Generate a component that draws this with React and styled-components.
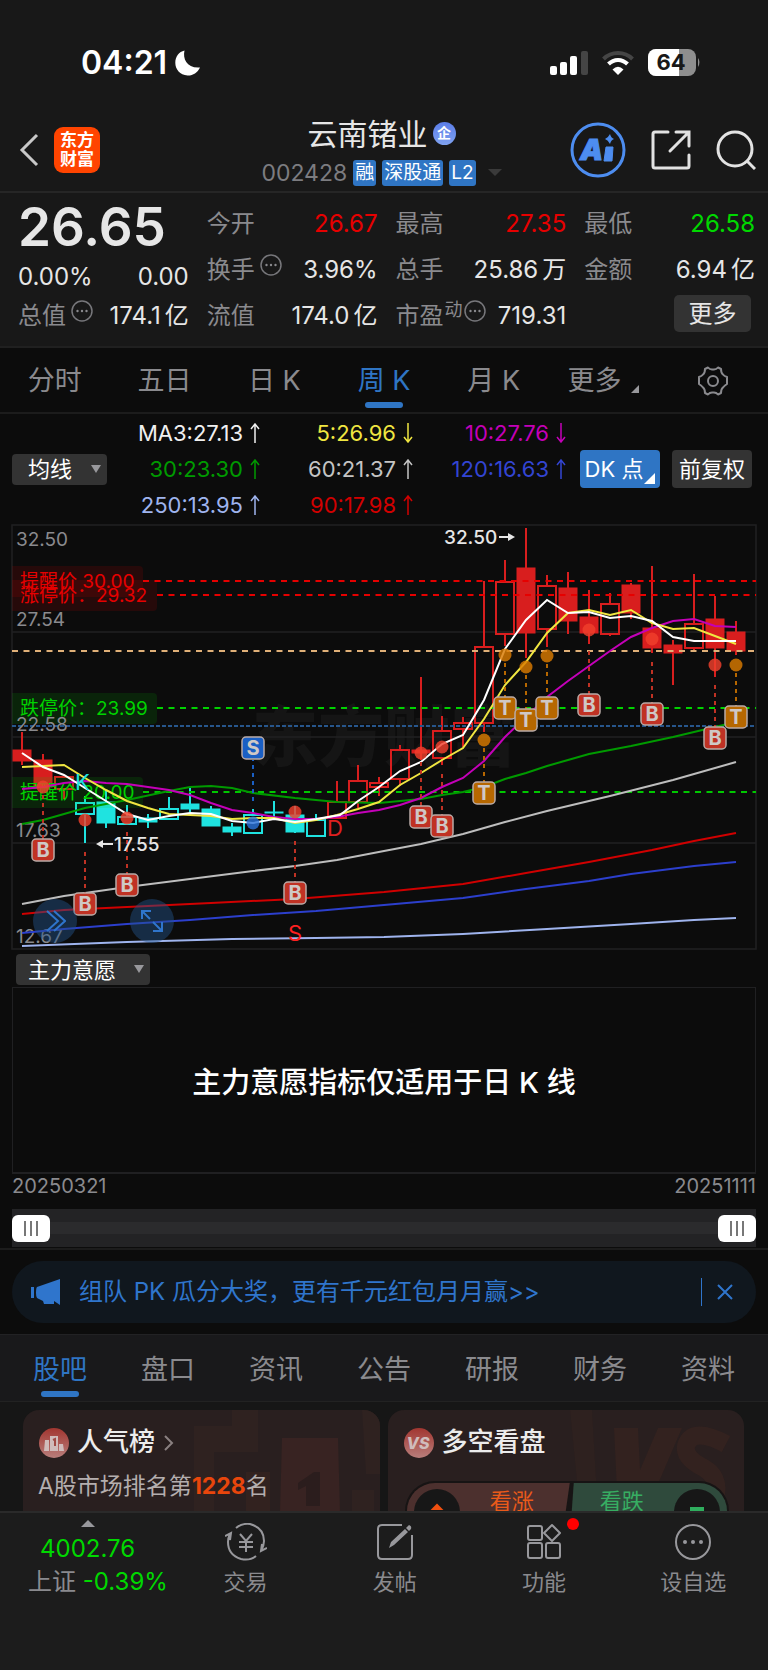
import React, { useState } from "react";
import styled, { createGlobalStyle } from "styled-components";

const quoteColumns = [
  [
    { label: "今开", value: "26.67", tone: "up" },
    { label: "换手", value: "3.96%", info: true },
    { label: "流值", value: "174.0", unit: "亿" },
  ],
  [
    { label: "最高", value: "27.35", tone: "up" },
    { label: "总手", value: "25.86", unit: "万" },
    { label: "市盈", sup: "动", value: "719.31", info: true },
  ],
  [
    { label: "最低", value: "26.58", tone: "down" },
    { label: "金额", value: "6.94", unit: "亿" },
  ],
];

const periods = ["分时", "五日", "日 K", "周 K", "月 K", "更多"];

const averages = [
  { text: "MA3:27.13", dir: "up", color: "#f0f0f0" },
  { text: "5:26.96", dir: "down", color: "#f0e641" },
  { text: "10:27.76", dir: "down", color: "#c400b8" },
  { text: "30:23.30", dir: "up", color: "#009a00" },
  { text: "60:21.37", dir: "up", color: "#c4c4c4" },
  { text: "120:16.63", dir: "up", color: "#3345d2" },
  { text: "250:13.95", dir: "up", color: "#9fb4ee" },
  { text: "90:17.98", dir: "up", color: "#d20000" },
];

// [high, bodyTop, bodyBottom, low, type]: r/c filled red/cyan, R/C hollow
const candles = [
  [212, 230, 241, 245, "r"],
  [234, 240, 267, 267, "r"],
  [257, 257, 269, 279, "R"],
  [276, 283, 294, 323, "C"],
  [270, 282, 303, 308, "c"],
  [285, 297, 304, 304, "C"],
  [294, 298, 302, 308, "c"],
  [277, 289, 299, 299, "C"],
  [268, 284, 289, 292, "c"],
  [286, 289, 306, 306, "c"],
  [303, 307, 312, 316, "c"],
  [289, 295, 313, 313, "C"],
  [281, 292, 293, 300, "c"],
  [286, 295, 312, 313, "c"],
  [294, 300, 316, 316, "C"],
  [261, 282, 298, 298, "R"],
  [245, 261, 282, 288, "R"],
  [257, 263, 267, 276, "R"],
  [225, 230, 259, 266, "R"],
  [157, 230, 233, 240, "r"],
  [196, 211, 238, 245, "R"],
  [197, 203, 209, 227, "R"],
  [61, 127, 203, 212, "R"],
  [40, 62, 114, 126, "R"],
  [8, 48, 113, 138, "r"],
  [55, 66, 109, 127, "R"],
  [52, 68, 101, 114, "r"],
  [70, 97, 113, 124, "r"],
  [73, 84, 114, 116, "R"],
  [63, 65, 93, 99, "r"],
  [46, 108, 128, 133, "r"],
  [120, 125, 133, 165, "r"],
  [54, 104, 128, 130, "R"],
  [76, 99, 128, 157, "r"],
  [101, 112, 131, 135, "r"],
];

const lines = [
  {
    color: "#9fb4ee",
    points:
      "22,426 127,422 232,419 316,418 384,417 463,414 547,409 631,404 694,400 736,398",
  },
  {
    color: "#2c3fcd",
    points:
      "22,413 64,409 127,404 190,400 253,395 316,391 384,385 463,378 526,369 589,361 631,354 694,346 736,342",
  },
  {
    color: "#d00000",
    points:
      "22,394 64,390 127,387 211,383 295,379 384,372 463,364 526,353 589,342 652,330 694,321 736,313",
  },
  {
    color: "#bdbdbd",
    points:
      "22,384 64,376 85,373 127,367 190,359 253,351 295,346 337,340 384,331 421,324 463,314 505,302 547,291 610,276 673,260 736,242",
  },
  {
    color: "#009a00",
    points:
      "22,304 43,300 85,288 127,280 169,271 190,267 211,266 232,268 253,273 295,278 337,282 379,283 400,281 421,279 442,275 463,272 484,267 505,259 526,253 547,246 568,240 589,234 610,230 631,226 673,217 694,212 715,207 736,202",
  },
  {
    color: "#c400b8",
    points:
      "22,269 43,267 64,263 85,261 106,263 127,264 148,267 169,270 190,275 211,283 232,290 253,293 274,297 295,299 316,299 337,297 358,293 379,290 400,285 421,278 442,267 463,258 484,241 505,217 526,197 547,177 568,161 589,146 610,131 631,117 652,108 673,101 694,99 715,106 736,107",
  },
  {
    color: "#f0e641",
    points:
      "22,247 43,246 64,245 85,258 106,270 127,281 148,288 169,294 190,295 211,296 232,299 253,298 274,298 295,303 316,300 337,295 358,289 379,282 400,265 421,253 442,240 463,228 484,199 505,165 526,142 547,113 568,93 589,90 610,95 631,90 652,103 673,109 694,108 715,116 736,124",
  },
  {
    color: "#ffffff",
    points:
      "22,233 43,247 64,255 85,268 106,281 127,294 148,300 169,296 190,293 211,294 232,301 253,303 274,299 295,302 316,299 340,295 358,281 379,267 400,251 421,242 442,224 463,215 484,180 505,129 526,100 547,80 568,93 589,92 610,98 631,96 652,101 673,117 694,121 715,121 736,121",
  },
];

const markerColors = { B: "#c03224", T: "#b66700", S: "#1a5fc4" };

const markers = [
  { i: 1, kind: "B", dot: 267, from: 275, y: 330 },
  { i: 3, kind: "B", dot: 300, from: 332, y: 384 },
  { i: 5, kind: "B", dot: 298, from: 312, y: 365 },
  { i: 13, kind: "B", dot: 292, from: 321, y: 373 },
  { i: 19, kind: "B", dot: 233, from: 242, y: 297 },
  { i: 20, kind: "B", dot: 227, from: 254, y: 306 },
  { i: 27, kind: "B", dot: 110, from: 131, y: 185 },
  { i: 30, kind: "B", dot: 119, from: 142, y: 194 },
  { i: 33, kind: "B", dot: 145, from: 165, y: 218 },
  { i: 22, kind: "T", dot: 220, from: 228, y: 273 },
  { i: 23, kind: "T", dot: 135, from: 143, y: 188 },
  { i: 24, kind: "T", dot: 147, from: 155, y: 200 },
  { i: 25, kind: "T", dot: 136, from: 144, y: 188 },
  { i: 34, kind: "T", dot: 145, from: 153, y: 197 },
  { i: 11, kind: "S", dot: 303, from: 281, y: 228 },
];

const priceTags = [
  { y: 61, width: 131, color: "#e60000", text: "提醒价 30.00" },
  { y: 75, width: 145, color: "#e60000", text: "涨停价：29.32" },
  { y: 188, width: 145, color: "#00d200", text: "跌停价：23.99" },
  { y: 272, width: 131, color: "#00d200", text: "提醒价 20.00" },
];

const scale = [
  { y: 26, text: "32.50" },
  { y: 106, text: "27.54" },
  { y: 211, text: "22.58" },
  { y: 317, text: "17.63" },
  { y: 423, text: "12.67" },
];

const infoTabs = ["股吧", "盘口", "资讯", "公告", "研报", "财务", "资料"];

const candleX = (i) => 22 + 21 * i;

const InfoDots = () => (
  <InfoIcon viewBox="0 0 22 22" aria-hidden="true">
    <circle cx="11" cy="11" r="10" fill="none" stroke="#77777b" strokeWidth="1.5" />
    <circle cx="6.5" cy="11" r="1.2" fill="#8a8a8e" />
    <circle cx="11" cy="11" r="1.2" fill="#8a8a8e" />
    <circle cx="15.5" cy="11" r="1.2" fill="#8a8a8e" />
  </InfoIcon>
);

const StatusBar = () => (
  <Status>
    <Clock>
      04:21
      <svg width="26" height="26" viewBox="0 0 26 26" aria-hidden="true">
        <path
          d="M9.5 0.5C7.5 9 12 18.5 25 17.5C22.5 23 17.5 25.8 12.5 25.5C5 25 0.3 19.5 0.3 12.8C0.3 6.5 4 1.8 9.5 0.5Z"
          fill="#fff"
        />
      </svg>
    </Clock>
    <StatusIcons>
      <svg width="38" height="24" viewBox="0 0 38 24" aria-hidden="true">
        <rect x="0" y="15" width="7" height="9" rx="2" fill="#fff" />
        <rect x="10" y="11" width="7" height="13" rx="2" fill="#fff" />
        <rect x="20" y="5" width="7" height="19" rx="2" fill="#fff" />
        <rect x="31" y="0" width="7" height="24" rx="2" fill="#454545" />
      </svg>
      <svg width="32" height="24" viewBox="0 0 32 24" aria-hidden="true">
        <path d="M1.5 8C9.5 0 22.5 0 30.5 8" fill="none" stroke="#454545" strokeWidth="4" />
        <path d="M6.5 13C12 7.5 20 7.5 25.5 13" fill="none" stroke="#fff" strokeWidth="4" />
        <path d="M10.5 18.5Q16 13 21.5 18.5L16 24Z" fill="#fff" />
      </svg>
      <svg width="53" height="27" viewBox="0 0 53 27" role="img" aria-label="64%">
        <clipPath id="battery">
          <rect width="48" height="27" rx="8" />
        </clipPath>
        <g clipPath="url(#battery)">
          <rect width="48" height="27" fill="#8e8e8e" />
          <rect width="31" height="27" fill="#fff" />
        </g>
        <path d="M50 9Q53 13 50 18Z" fill="#8e8e8e" />
        <text x="23" y="21" textAnchor="middle" fontSize="22" fontWeight="700" fill="#181818">
          64
        </text>
      </svg>
    </StatusIcons>
  </Status>
);

const Header = () => (
  <TopBar>
    <TopLeft>
      <IconButton aria-label="返回">
        <svg width="21" height="34" viewBox="0 0 21 34">
          <path d="M18 2L3 17L18 32" fill="none" stroke="#c8c8c8" strokeWidth="3" />
        </svg>
      </IconButton>
      <BrandLink href="#home">
        <span>东方</span>
        <span>财富</span>
      </BrandLink>
    </TopLeft>
    <TitleBlock>
      <TitleRow>
        <StockName>云南锗业</StockName>
        <CompanyBadge>企</CompanyBadge>
      </TitleRow>
      <CodeRow>
        <span>002428</span>
        <Tag>融</Tag>
        <Tag>深股通</Tag>
        <Tag>L2</Tag>
        <CodeCaret />
      </CodeRow>
    </TitleBlock>
    <TopRight>
      <IconButton aria-label="Ai">
        <svg width="56" height="56" viewBox="0 0 56 56">
          <circle cx="28" cy="28" r="26" fill="none" stroke="#4d8df0" strokeWidth="3" />
          <text
            x="10"
            y="38"
            fontSize="29"
            fontWeight="900"
            fontStyle="italic"
            fill="#4d8df0"
            stroke="#4d8df0"
            strokeWidth="1"
          >
            A
          </text>
          <path d="M36 25H43L42 39H34Z" fill="#4d8df0" stroke="#4d8df0" strokeLinejoin="round" />
          <path d="M40 12Q41 16 44 17Q41 18 40 22Q38 18 35 17Q38 16 40 12Z" fill="#4d8df0" />
        </svg>
      </IconButton>
      <IconButton aria-label="分享">
        <svg width="40" height="40" viewBox="0 0 40 40">
          <path
            d="M17 2H4Q2 2 2 4V36Q2 38 4 38H36Q38 38 38 36V25M25 2H38V16M37 3L19 21"
            fill="none"
            stroke="#e2e2e2"
            strokeWidth="3"
            strokeLinecap="round"
          />
        </svg>
      </IconButton>
      <IconButton aria-label="搜索">
        <svg width="40" height="40" viewBox="0 0 40 40">
          <circle cx="19" cy="19" r="17" fill="none" stroke="#e2e2e2" strokeWidth="3" />
          <path d="M31 31L39 39" stroke="#e2e2e2" strokeWidth="3" />
        </svg>
      </IconButton>
    </TopRight>
  </TopBar>
);

const Quote = () => (
  <QuotePanel>
    <PriceColumn>
      <LastPrice>26.65</LastPrice>
      <QuoteRow $tall>
        <Value>0.00%</Value>
        <Value>0.00</Value>
      </QuoteRow>
      <QuoteRow>
        <Label>
          总值
          <InfoDots />
        </Label>
        <Value>
          174.1<Unit>亿</Unit>
        </Value>
      </QuoteRow>
    </PriceColumn>
    {quoteColumns.map((column, index) => (
      <QuoteColumn key={index}>
        {column.map((item) => (
          <QuoteRow key={item.label}>
            <Label>
              {item.label}
              {item.sup && <sup>{item.sup}</sup>}
              {item.info && <InfoDots />}
            </Label>
            <Value $tone={item.tone}>
              {item.value}
              {item.unit && <Unit>{item.unit}</Unit>}
            </Value>
          </QuoteRow>
        ))}
        {index === 2 && <MoreButton>更多</MoreButton>}
      </QuoteColumn>
    ))}
  </QuotePanel>
);

const Arrow = ({ dir }) => (
  <svg width="10" height="20" viewBox="0 0 10 20" aria-hidden="true">
    <path
      d={dir === "up" ? "M5 20V1M1 6L5 1L9 6" : "M5 0V19M1 14L5 19L9 14"}
      fill="none"
      stroke="currentColor"
      strokeWidth="1.5"
    />
  </svg>
);

const Candle = ({ x, data }) => {
  const [high, top, bottom, low, type] = data;
  const color = type.toLowerCase() === "r" ? "#d81e1e" : "#1fe3e0";
  const hollow = type === "R" || type === "C";
  return (
    <g stroke={color} strokeWidth="2">
      <path d={`M${x} ${high}V${top}M${x} ${bottom}V${low}`} />
      <rect
        x={x - 9}
        y={top}
        width="18"
        height={bottom - top}
        fill={hollow ? "none" : color}
        strokeWidth={hollow ? 2 : 1}
      />
    </g>
  );
};

const Marker = ({ i, kind, dot, from, y }) => {
  const x = candleX(i);
  const end = kind === "S" ? y + 12 : y - 11;
  return (
    <g>
      <circle
        cx={x}
        cy={dot}
        r="6.5"
        fill={kind === "T" ? "#d97a00" : kind === "S" ? "#2a72d8" : "#f0402c"}
        opacity="0.82"
      />
      <path d={`M${x} ${from}V${end}`} stroke={markerColors[kind]} strokeWidth="2" strokeDasharray="4 4" />
      <rect
        x={x - 11}
        y={y - 11}
        width="22"
        height="22"
        rx="4"
        fill={markerColors[kind]}
        stroke="#b9aaa6"
        strokeWidth="1.5"
      />
      <text x={x} y={y + 7} textAnchor="middle" fontSize="20" fontWeight="700" fill="#cfc8c6">
        {kind}
      </text>
    </g>
  );
};

const KLineChart = () => (
  <ChartBox>
    <ChartSvg viewBox="0 0 768 432" role="img" aria-label="周K线图">
      <text
        x="384"
        y="241"
        textAnchor="middle"
        fontSize="66"
        fontWeight="900"
        fill="#151515"
      >
        东方财富
      </text>
      <g stroke="#202022" strokeWidth="1.5" fill="none">
        <rect x="12" y="5" width="744" height="424" />
        <path d="M12 112H756M12 217H756M12 323H756" />
      </g>
      {candles.map((data, i) => (
        <Candle key={i} x={candleX(i)} data={data} />
      ))}
      <g fill="none" strokeWidth="2">
        <path d="M143 61H756" stroke="#e60000" strokeDasharray="6 5.5" />
        <path d="M157 75H756" stroke="#e60000" strokeDasharray="6 5.5" />
        <path d="M12 131H756" stroke="#e0b078" strokeDasharray="6 5.5" />
        <path d="M157 188H756" stroke="#00d200" strokeDasharray="6 5.5" />
        <path d="M12 206H756" stroke="#27568c" strokeDasharray="4 2" />
        <path d="M143 272H756" stroke="#00c800" strokeDasharray="6 5.5" />
      </g>
      {priceTags.map((tag) => (
        <g key={tag.text}>
          <path
            d={`M12 ${tag.y - 15}h${tag.width - 4}q4 0 4 4v23q0 4 -4 4h${4 - tag.width}z`}
            fill={tag.color}
            opacity="0.12"
          />
          <text x="20" y={tag.y + 7} fontSize="19" fill={tag.color}>
            {tag.text}
          </text>
        </g>
      ))}
      {scale.map((mark) => (
        <text key={mark.text} x="16" y={mark.y} fontSize="19" fill="#8a8a8e">
          {mark.text}
        </text>
      ))}
      {lines.map((line) => (
        <polyline key={line.color} points={line.points} fill="none" stroke={line.color} strokeWidth="2" />
      ))}
      {markers.map((marker) => (
        <Marker key={marker.i} {...marker} />
      ))}
      <g fontSize="22">
        <text x="75" y="270" fill="#1fe3e0">
          K
        </text>
        <text x="327" y="316" fill="#e02020">
          D
        </text>
        <text x="295" y="421" textAnchor="middle" fill="#ff2020">
          S
        </text>
      </g>
      <g fontSize="19" fontWeight="500" fill="#e6e6e6">
        <text x="444" y="24">
          32.50
        </text>
        <text x="114" y="331">
          17.55
        </text>
      </g>
      <g fill="#e6e6e6">
        <path d="M499 16H508V13L515 17L508 21V18H499Z" />
        <path d="M113 323H103V320L96 324L103 328V325H113Z" />
      </g>
    </ChartSvg>
    <FloatButtons>
      <FloatButton aria-label="展开">
        <svg width="22" height="22" viewBox="0 0 22 22">
          <path
            d="M3 1L14 11L3 21M10 1L21 11L10 21"
            fill="none"
            stroke="#2f75cc"
            strokeWidth="2"
          />
        </svg>
      </FloatButton>
      <FloatButton aria-label="全屏">
        <svg width="22" height="22" viewBox="0 0 22 22">
          <path
            d="M1 9V1H10M1 1L9 9M21 12V21H12M21 21L12 12"
            fill="none"
            stroke="#2f75cc"
            strokeWidth="2"
          />
        </svg>
      </FloatButton>
    </FloatButtons>
  </ChartBox>
);

const RankCard = () => (
  <Card>
    <CardArt viewBox="0 0 186 102" aria-hidden="true">
      <path d="M0 102V16H38V0H64V42H20V102Z" fill="#2f2220" />
      <path d="M52 102V62H76V102Z" fill="#32221f" />
      <path d="M88 28H144L146 102H86Z" fill="#382322" />
      <path d="M104 73L120 62H126V96H112V76L104 80Z" fill="#2b1d1d" />
      <path d="M158 80H180V102H158ZM168 0H186V64H172Z" fill="#2f2220" />
    </CardArt>
    <CardHead href="#rank">
      <svg width="32" height="32" viewBox="0 0 32 32" aria-hidden="true">
        <defs>
          <linearGradient id="rose" x1="0" y1="0" x2="0" y2="1">
            <stop offset="0" stopColor="#a23630" />
            <stop offset="1" stopColor="#b87e7b" />
          </linearGradient>
        </defs>
        <circle cx="16" cy="16" r="15" fill="url(#rose)" />
        <path d="M7 13H11V24H6ZM12 9H20V24H12ZM21 17H25L26 24H21Z" fill="#d0bcbb" />
        <path d="M15 13L17 12V19" fill="none" stroke="#a04a45" strokeWidth="2" />
      </svg>
      <span>人气榜</span>
      <svg width="20" height="16" viewBox="0 0 20 16" aria-hidden="true">
        <path d="M8 1L15 8L8 15" fill="none" stroke="#8a8080" strokeWidth="2" />
      </svg>
    </CardHead>
    <RankText>
      A股市场排名第<strong>1228</strong>名
    </RankText>
  </Card>
);

const VoteCard = () => (
  <Card>
    <CardArt viewBox="0 0 186 102" aria-hidden="true">
      <path d="M12 0H34L40 102H22Z" fill="#2e211f" />
      <path d="M56 18H80L82 60L100 18H124L88 102H60Z" fill="#33221f" />
      <path
        d="M168 34Q134 16 128 36Q126 48 146 58Q166 70 154 96"
        fill="none"
        stroke="#33221f"
        strokeWidth="18"
      />
    </CardArt>
    <CardHead href="#vote">
      <svg width="32" height="32" viewBox="0 0 32 32" aria-hidden="true">
        <circle cx="16" cy="16" r="15" fill="url(#rose)" />
        <text x="15" y="22" textAnchor="middle" fontSize="16" fontWeight="800" fontStyle="italic" fill="#d0bcbb">
          VS
        </text>
      </svg>
      <span>多空看盘</span>
    </CardHead>
    <VoteBar>
      <VoteButton $side="up">
        <VoteDot>
          <svg width="46" height="46" viewBox="0 0 46 46" aria-hidden="true">
            <path d="M19 20L23 16L27 20Z" fill="#f05010" stroke="#f05010" strokeWidth="2" />
          </svg>
        </VoteDot>
        看涨
      </VoteButton>
      <VoteButton $side="down">
        看跌
        <VoteDot>
          <svg width="46" height="46" viewBox="0 0 46 46" aria-hidden="true">
            <path d="M16 20H30" stroke="#2fae5e" strokeWidth="4" />
          </svg>
        </VoteDot>
      </VoteButton>
    </VoteBar>
  </Card>
);

const BottomBar = () => (
  <Dock>
    <IndexLink href="#index">
      <IndexTop>
        <UpCaret />
        <IndexValue>4002.76</IndexValue>
      </IndexTop>
      <IndexRow>
        上证 <em>-0.39%</em>
      </IndexRow>
    </IndexLink>
    <DockButton>
      <svg width="42" height="38" viewBox="0 0 42 38" aria-hidden="true">
        <g fill="none" stroke="#98989c" strokeWidth="2">
          <path d="M11 5Q17 0 25 1Q39 5 39 18Q39 23 36 28M42 25L36 28L37 21" />
          <path d="M31 33Q25 38 16 36Q3 32 3 19Q3 15 5 11M0 13L6 10L5 17" />
          <path d="M15 11L21 18L27 11M21 18V29M14 19H28M14 24H28" />
        </g>
      </svg>
      交易
    </DockButton>
    <DockButton>
      <svg width="38" height="38" viewBox="0 0 38 38" aria-hidden="true">
        <path
          d="M26 2H6Q2 2 2 6V32Q2 36 6 36H32Q36 36 36 32V12"
          fill="none"
          stroke="#98989c"
          strokeWidth="2"
        />
        <path d="M13 25L15 19L29 6L32 9L18 22Z M30 5L33 2Q36 3 35 6L33 8Z" fill="#98989c" />
      </svg>
      发帖
    </DockButton>
    <DockButton>
      <DockIcon>
        <svg width="36" height="38" viewBox="0 0 36 38" aria-hidden="true">
          <g fill="none" stroke="#98989c" strokeWidth="2">
            <rect x="2" y="3" width="14" height="14" rx="2" />
            <rect x="2" y="20" width="14" height="15" rx="2" />
            <rect x="20" y="20" width="14" height="15" rx="2" />
            <path d="M26 2L34 10L26 18L18 10Z" strokeLinejoin="round" />
          </g>
        </svg>
        <RedDot />
      </DockIcon>
      功能
    </DockButton>
    <DockButton>
      <svg width="38" height="38" viewBox="0 0 38 38" aria-hidden="true">
        <circle cx="19" cy="19" r="17" fill="none" stroke="#98989c" strokeWidth="2" />
        <circle cx="11" cy="19" r="2" fill="#98989c" />
        <circle cx="19" cy="19" r="2" fill="#98989c" />
        <circle cx="27" cy="19" r="2" fill="#98989c" />
      </svg>
      设自选
    </DockButton>
  </Dock>
);

const App = () => {
  const [period, setPeriod] = useState("周 K");
  const [infoTab, setInfoTab] = useState("股吧");
  const [range, setRange] = useState([0, 100]);

  return (
    <Page>
      <GlobalStyle />
      <StatusBar />
      <Header />
      <Quote />
      <PeriodTabs>
        {periods.map((name) => (
          <PeriodTab key={name} $active={name === period} onClick={() => setPeriod(name)}>
            {name}
            {name === "更多" && <Corner />}
          </PeriodTab>
        ))}
        <PeriodTab aria-label="设置">
          <svg width="32" height="30" viewBox="0 0 32 30">
            <path
              d="M11 1.5Q13 4 16 3.5Q19 4 21 1.5L24 3Q24 7 26 8.5Q27 10 30 11V18Q27 20 26 21.5Q24 23 24 27L21 28.5Q19 26 16 26.5Q13 26 11 28.5L8 27Q8 23 6 21.5Q5 20 2 18V11Q5 10 6 8.5Q8 7 8 3Z"
              fill="none"
              stroke="#8a8a8e"
              strokeWidth="2"
              strokeLinejoin="round"
            />
            <circle cx="16" cy="15" r="5" fill="none" stroke="#8a8a8e" strokeWidth="2" />
          </svg>
        </PeriodTab>
      </PeriodTabs>
      <AverageBar>
        <SelectWrap $width={95} $indent={16}>
          <select aria-label="均线" defaultValue="均线">
            <option>均线</option>
          </select>
        </SelectWrap>
        <AverageGrid>
          {averages.map((item) => (
            <Average key={item.text} $color={item.color}>
              {item.text}
              <Arrow dir={item.dir} />
            </Average>
          ))}
        </AverageGrid>
        <ChipGroup>
          <Chip $primary>
            DK 点
            <ChipCorner />
          </Chip>
          <Chip>前复权</Chip>
        </ChipGroup>
      </AverageBar>
      <KLineChart />
      <IndicatorBar>
        <SelectWrap $width={134} $indent={12}>
          <select aria-label="指标" defaultValue="主力意愿">
            <option>主力意愿</option>
          </select>
        </SelectWrap>
      </IndicatorBar>
      <IndicatorPanel>主力意愿指标仅适用于日 K 线</IndicatorPanel>
      <DateRow>
        <span>20250321</span>
        <span>20251111</span>
      </DateRow>
      <RangeTrack>
        <RangeInput
          type="range"
          aria-label="开始"
          value={range[0]}
          onChange={(e) => setRange([Number(e.target.value), range[1]])}
        />
        <RangeInput
          type="range"
          aria-label="结束"
          value={range[1]}
          onChange={(e) => setRange([range[0], Number(e.target.value)])}
        />
      </RangeTrack>
      <NoticeArea>
        <Notice>
          <svg width="30" height="28" viewBox="0 0 30 28" aria-hidden="true">
            <path d="M0 9H3V20H0ZM6 9L29 1V27L23 23V26H13L12 23L6 20Q5 19 5 15Q5 10 6 9Z" fill="#2f75cc" />
          </svg>
          <NoticeLink href="#activity">组队 PK 瓜分大奖，更有千元红包月月赢&gt;&gt;</NoticeLink>
          <NoticeClose aria-label="关闭">
            <svg width="16" height="16" viewBox="0 0 16 16">
              <path d="M1 1L15 15M15 1L1 15" stroke="#2f75cc" strokeWidth="2" />
            </svg>
          </NoticeClose>
        </Notice>
      </NoticeArea>
      <InfoTabs>
        {infoTabs.map((name) => (
          <InfoTab key={name} $active={name === infoTab} onClick={() => setInfoTab(name)}>
            {name}
          </InfoTab>
        ))}
      </InfoTabs>
      <Cards>
        <RankCard />
        <VoteCard />
      </Cards>
      <BottomBar />
    </Page>
  );
};

const GlobalStyle = createGlobalStyle`
  * {
    box-sizing: border-box;
  }

  body {
    margin: 0;
    background: #0c0c0c;
    font-family: Inter, "Noto Sans CJK SC", sans-serif;
  }

  button, select, input {
    font-family: inherit;
    border: none;
    padding: 0;
    margin: 0;
    background: none;
    color: inherit;
    cursor: pointer;
  }

  a {
    color: inherit;
    text-decoration: none;
  }

  svg {
    display: block;
    flex: none;
  }
`;

const Page = styled.div`
  background: #0c0c0c;
  color: #e6e6e6;
  font-size: 24px;
`;

const Status = styled.div`
  display: flex;
  justify-content: space-between;
  align-items: center;
  height: 112px;
  padding: 13px 67px 0 81px;
  background: #181818;
`;

const Clock = styled.div`
  display: flex;
  align-items: center;
  gap: 8px;
  font-size: 32px;
  font-weight: 600;
  color: #fff;
`;

const StatusIcons = styled.div`
  display: flex;
  align-items: center;
  gap: 14px;
`;

const TopBar = styled.header`
  display: grid;
  grid-template-columns: 1fr auto 1fr;
  align-items: center;
  height: 81px;
  padding: 0 12px 4px 19px;
  background: #181818;
  border-bottom: 2px solid #262626;
`;

const TopLeft = styled.div`
  display: flex;
  align-items: center;
  gap: 14px;
`;

const TopRight = styled.div`
  display: flex;
  align-items: center;
  justify-content: flex-end;
  gap: 25px;
`;

const IconButton = styled.button`
  display: flex;
`;

const BrandLink = styled.a`
  display: flex;
  flex-direction: column;
  align-items: center;
  justify-content: center;
  width: 46px;
  height: 46px;
  border-radius: 9px;
  background: #ff4400;
  color: #fff;
  font-size: 17px;
  font-weight: 700;
  line-height: 19px;
`;

const TitleBlock = styled.div`
  display: flex;
  flex-direction: column;
  align-items: center;
  gap: 6px;
  padding-right: 12px;
`;

const TitleRow = styled.div`
  display: flex;
  align-items: center;
  gap: 5px;
`;

const StockName = styled.h1`
  margin: 0;
  font-size: 30px;
  font-weight: 400;
  line-height: 40px;
`;

const CompanyBadge = styled.span`
  width: 23px;
  height: 23px;
  border-radius: 50%;
  background: linear-gradient(#5b7de8, #7fa2f0);
  color: #fff;
  font-size: 14px;
  font-weight: 700;
  line-height: 22px;
  text-align: center;
`;

const CodeRow = styled.div`
  display: flex;
  align-items: center;
  gap: 6px;
  color: #7c7c80;
  font-size: 23px;
  line-height: 26px;
`;

const Tag = styled.span`
  height: 26px;
  padding: 0 2px;
  border-radius: 3px;
  background: #2f75c4;
  color: #fff;
  font-size: 19px;
  line-height: 26px;
`;

const CodeCaret = styled.span`
  margin-left: 6px;
  border: 7px solid transparent;
  border-top-color: #3a3a3a;
  border-bottom: none;
`;

const QuotePanel = styled.section`
  display: grid;
  grid-template-columns: repeat(4, 1fr);
  column-gap: 18px;
  height: 155px;
  padding: 8px 13px 0 18px;
  background: #181818;
  border-bottom: 2px solid #202020;
`;

const PriceColumn = styled.div`
  display: flex;
  flex-direction: column;
`;

const LastPrice = styled.div`
  height: 52px;
  font-size: 53px;
  font-weight: 600;
  line-height: 52px;
`;

const QuoteColumn = styled.div`
  display: flex;
  flex-direction: column;
`;

const QuoteRow = styled.div`
  display: flex;
  align-items: center;
  justify-content: space-between;
  height: ${(props) => (props.$tall ? "40px" : "46px")};
  padding-top: ${(props) => (props.$tall ? "8px" : "0")};
  line-height: 30px;
  white-space: nowrap;
`;

const Label = styled.span`
  display: flex;
  align-items: center;
  color: #8a8a8e;

  sup {
    margin: 0 0 12px 1px;
    font-size: 18px;
    line-height: 20px;
  }
`;

const InfoIcon = styled.svg`
  width: 22px;
  height: 22px;
  margin: 0 0 10px 5px;

  sup + & {
    margin-left: 1px;
  }
`;

const Value = styled.span`
  color: ${(props) =>
    props.$tone === "up" ? "#e60000" : props.$tone === "down" ? "#00d800" : "#e6e6e6"};
`;

const Unit = styled.span`
  margin-left: 4px;
`;

const MoreButton = styled.button`
  align-self: flex-end;
  width: 77px;
  height: 37px;
  margin: 2px 4px 0 0;
  border-radius: 5px;
  background: #333;
  font-size: 24px;
  line-height: 36px;
`;

const PeriodTabs = styled.nav`
  display: grid;
  grid-template-columns: repeat(7, 1fr);
  height: 66px;
  border-bottom: 2px solid #1c1c1c;
`;

const tabMark = `
  &::after {
    content: "";
    position: absolute;
    left: 50%;
    bottom: 4px;
    width: 38px;
    height: 6px;
    margin-left: -19px;
    border-radius: 3px;
    background: #2f75c4;
  }
`;

const PeriodTab = styled.button`
  position: relative;
  display: flex;
  align-items: center;
  justify-content: center;
  gap: 10px;
  padding-top: 2px;
  color: ${(props) => (props.$active ? "#2f75c4" : "#8a8a8e")};
  font-size: 27px;
  line-height: 40px;
  ${(props) => props.$active && tabMark}
`;

const Corner = styled.i`
  align-self: flex-end;
  margin-bottom: 19px;
  border-left: 8px solid transparent;
  border-bottom: 8px solid #98989c;
`;

const AverageBar = styled.section`
  display: flex;
  align-items: center;
  height: 110px;
  padding: 0 16px 0 12px;
`;

const SelectWrap = styled.div`
  position: relative;
  width: ${(props) => props.$width}px;

  select {
    display: block;
    width: 100%;
    height: 31px;
    padding: 0 8px 0 ${(props) => props.$indent}px;
    border-radius: 4px;
    background: #333;
    color: #fff;
    font-size: 22px;
    line-height: 30px;
    appearance: none;
  }

  &::after {
    content: "";
    position: absolute;
    right: 6px;
    top: 11px;
    border: 5px solid transparent;
    border-top: 8px solid #98989c;
    border-bottom: none;
    pointer-events: none;
  }
`;

const AverageGrid = styled.div`
  display: grid;
  grid-template-columns: repeat(3, 153px);
  grid-auto-rows: 36px;
`;

const Average = styled.span`
  display: flex;
  align-items: center;
  justify-content: flex-end;
  gap: 7px;
  color: ${(props) => props.$color};
  font-size: 22px;
`;

const ChipGroup = styled.div`
  display: flex;
  gap: 12px;
  margin-left: auto;
`;

const Chip = styled.button`
  position: relative;
  width: 80px;
  height: 38px;
  padding-right: ${(props) => (props.$primary ? "12px" : "0")};
  border-radius: 4px;
  background: ${(props) => (props.$primary ? "#2f75c4" : "#333")};
  color: #fff;
  font-size: 22px;
  line-height: 36px;
  white-space: nowrap;
`;

const ChipCorner = styled.i`
  position: absolute;
  right: 5px;
  bottom: 4px;
  border-left: 11px solid transparent;
  border-bottom: 11px solid #fff;
`;

const ChartBox = styled.section`
  position: relative;
  margin-top: -4px;
`;

const ChartSvg = styled.svg`
  width: 100%;
`;

const FloatButtons = styled.div`
  position: absolute;
  left: 33px;
  bottom: 9px;
  display: flex;
  gap: 53px;
`;

const FloatButton = styled.button`
  display: flex;
  align-items: center;
  justify-content: center;
  width: 44px;
  height: 44px;
  border-radius: 50%;
  background: rgba(35, 85, 140, 0.45);
`;

const IndicatorBar = styled.div`
  padding: 2px 16px;
`;

const IndicatorPanel = styled.section`
  display: flex;
  align-items: center;
  justify-content: center;
  height: 187px;
  margin: 0 12px;
  border: 1px solid #202022;
  border-bottom-width: 2px;
  color: #fff;
  font-size: 29px;
  font-weight: 500;
`;

const DateRow = styled.div`
  display: flex;
  justify-content: space-between;
  padding: 0 12px;
  color: #8a8a8e;
  font-size: 20px;
  line-height: 24px;
`;

const RangeTrack = styled.div`
  position: relative;
  height: 38px;
  margin: 11px 12px 1px;
  background: linear-gradient(#232325 13px, #2b2b2d 13px, #2b2b2d 25px, #232325 25px);
`;

const RangeInput = styled.input`
  position: absolute;
  inset: 0;
  width: 100%;
  height: 38px;
  appearance: none;
  pointer-events: none;

  &::-webkit-slider-thumb {
    appearance: none;
    width: 38px;
    height: 27px;
    border-radius: 6px;
    background:
      linear-gradient(#777, #777) 12px 6px / 2px 15px no-repeat,
      linear-gradient(#777, #777) 18px 6px / 2px 15px no-repeat,
      linear-gradient(#777, #777) 24px 6px / 2px 15px no-repeat,
      #fff;
    pointer-events: auto;
  }
`;

const NoticeArea = styled.div`
  padding: 11px 12px;
  border-top: 2px solid #1c1c1c;
  border-bottom: 1px solid #222224;
`;

const Notice = styled.div`
  display: flex;
  align-items: center;
  height: 62px;
  padding: 0 23px 0 19px;
  border-radius: 31px;
  background: #10171e;
  color: #2f75cc;
`;

const NoticeLink = styled.a`
  flex: 1;
  margin-left: 18px;
  font-size: 24px;
  line-height: 36px;
  white-space: nowrap;
`;

const NoticeClose = styled.button`
  display: flex;
  align-items: center;
  height: 28px;
  padding-left: 15px;
  border-left: 1px solid #2f75cc;
`;

const InfoTabs = styled.nav`
  display: grid;
  grid-template-columns: repeat(7, 1fr);
  height: 67px;
  padding: 0 6px;
  background: #19191b;
  border-bottom: 1px solid #222;
`;

const InfoTab = styled(PeriodTab)`
  padding-top: 4px;
`;

const Cards = styled.section`
  display: grid;
  grid-template-columns: 1fr 1fr;
  gap: 8px;
  height: 109px;
  padding: 8px 24px 0 23px;
  overflow: hidden;
  background: #161616;
`;

const Card = styled.article`
  position: relative;
  height: 160px;
  padding: 16px 15px;
  border-radius: 16px;
  overflow: hidden;
  background: #291f1f;
`;

const CardArt = styled.svg`
  position: absolute;
  top: 0;
  right: 0;
  width: 186px;
  height: 102px;
`;

const CardHead = styled.a`
  position: relative;
  display: flex;
  align-items: center;
  gap: 7px;
  height: 34px;
  color: #ececec;
  font-size: 26px;
  font-weight: 500;
  line-height: 34px;

  span {
    height: 36px;
  }

  span + svg {
    margin-left: -5px;
  }
`;

const RankText = styled.p`
  position: relative;
  margin: 10px 0 0;
  color: #b4aeae;
  font-size: 23px;
  line-height: 32px;

  strong {
    color: #e8460c;
    font-weight: 700;
  }
`;

const VoteBar = styled.div`
  position: relative;
  display: flex;
  height: 60px;
  margin: 21px 0 0 2px;
  border: 2px solid #171414;
  border-radius: 30px;
  overflow: hidden;
  background: #171414;
`;

const VoteButton = styled.button`
  display: flex;
  align-items: flex-start;
  justify-content: space-between;
  flex: 1;
  padding: ${(props) => (props.$side === "up" ? "6px 36px 0 7px" : "6px 7px 0 30px")};
  background: ${(props) => (props.$side === "up" ? "#4c302e" : "#2f4a3c")};
  color: ${(props) => (props.$side === "up" ? "#ea5a1a" : "#37ad62")};
  clip-path: ${(props) =>
    props.$side === "up"
      ? "polygon(0 0, 100% 0, calc(100% - 8px) 100%, 0 100%)"
      : "polygon(4px 0, 100% 0, 100% 100%, 0 100%)"};
  font-size: 22px;
  line-height: 24px;
`;

const VoteDot = styled.span`
  width: 46px;
  height: 46px;
  border-radius: 50%;
  background: #171717;
`;

const Dock = styled.footer`
  display: grid;
  grid-template-columns: 171px repeat(4, 1fr);
  height: 160px;
  background: #1c1c1c;
  border-top: 2px solid #2a2a2a;
  border-bottom: 1px solid #444;
`;

const IndexLink = styled.a`
  display: flex;
  flex-direction: column;
  align-items: flex-start;
  padding: 7px 0 0 28px;
  color: #8a8a8e;
`;

const IndexTop = styled.span`
  display: flex;
  flex-direction: column;
  align-items: center;
  margin-left: 12px;
`;

const UpCaret = styled.i`
  border: 7px solid transparent;
  border-top: none;
  border-bottom: 7px solid #98989c;
`;

const IndexValue = styled.span`
  margin-top: 6px;
  color: #00d800;
  font-size: 24px;
  line-height: 32px;
`;

const IndexRow = styled.span`
  font-size: 24px;
  line-height: 34px;
  white-space: nowrap;

  em {
    color: #00d800;
    font-style: normal;
  }
`;

const DockButton = styled.button`
  display: flex;
  flex-direction: column;
  align-items: center;
  gap: 6px;
  padding-top: 10px;
  color: #8a8a8e;
  font-size: 22px;
  line-height: 30px;
`;

const DockIcon = styled.span`
  position: relative;
`;

const RedDot = styled.i`
  position: absolute;
  top: -5px;
  right: -17px;
  width: 12px;
  height: 12px;
  border-radius: 50%;
  background: #ff0000;
`;

export default App;
